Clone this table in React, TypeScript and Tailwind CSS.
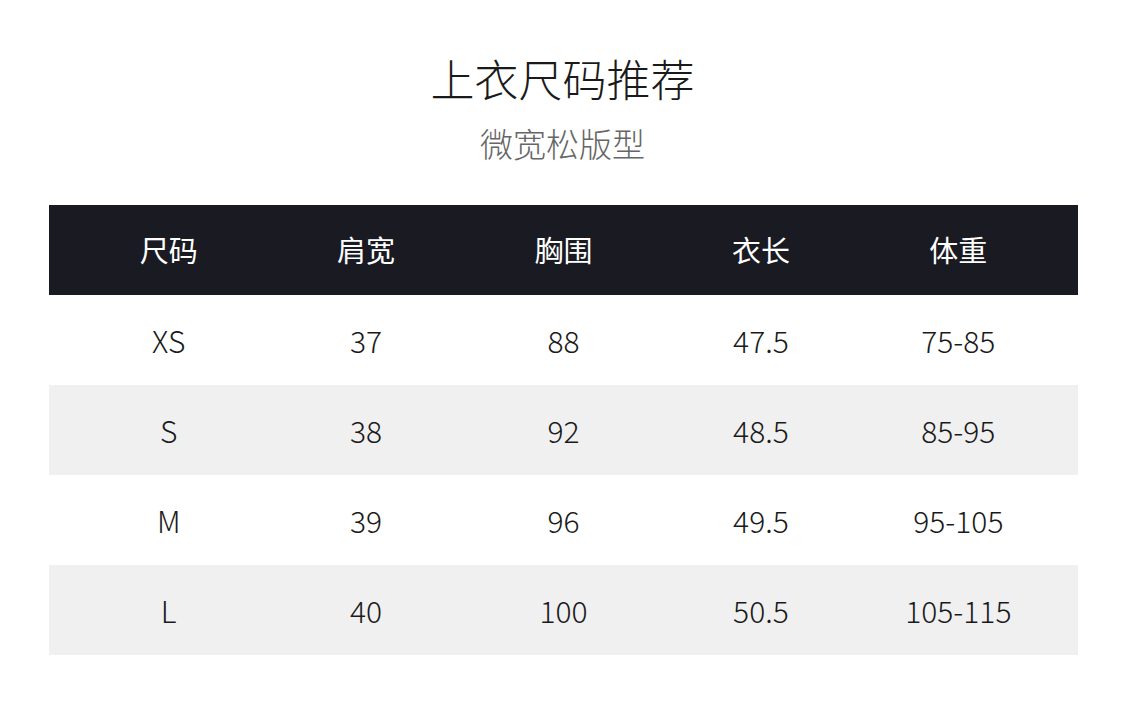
const HEAD = ["尺码", "肩宽", "胸围", "衣长", "体重"];

const ROWS = [
  ["XS", "37", "88", "47.5", "75-85"],
  ["S", "38", "92", "48.5", "85-95"],
  ["M", "39", "96", "49.5", "95-105"],
  ["L", "40", "100", "50.5", "105-115"],
];

const font = "font-['Noto_Sans_CJK_SC','Noto_Sans',sans-serif]";

export default function App() {
  return (
    <div className={`h-[702px] w-[1125px] bg-white ${font}`}>
      {/* 标题 */}
      <div className="flex flex-col items-center pt-[48px]">
        <h1 className="text-[44px] leading-[60px] font-light text-[#1a1a1a]">
          上衣尺码推荐
        </h1>
        <p className="mt-[12px] text-[33px] leading-[46px] font-light text-[#666]">
          微宽松版型
        </p>
      </div>

      {/* 表格 */}
      <div className="mx-[49px] mt-[39px] w-[1029px]">
        <div className="flex h-[90px] items-center bg-[#1a1a22] px-[21px]">
          {HEAD.map((h) => (
            <div
              key={h}
              className="flex-1 text-center text-[29px] font-normal text-white"
            >
              {h}
            </div>
          ))}
        </div>
        {ROWS.map((r, i) => (
          <div
            key={r[0]}
            className={[
              "flex h-[90px] items-center px-[21px]",
              i % 2 === 1 ? "bg-[#f0f0f0]" : "bg-white",
            ].join(" ")}
          >
            {r.map((c, j) => (
              <div
                key={j}
                className="flex-1 text-center text-[30px] font-light text-[#1a1a1a]"
              >
                {c}
              </div>
            ))}
          </div>
        ))}
      </div>
    </div>
  );
}
